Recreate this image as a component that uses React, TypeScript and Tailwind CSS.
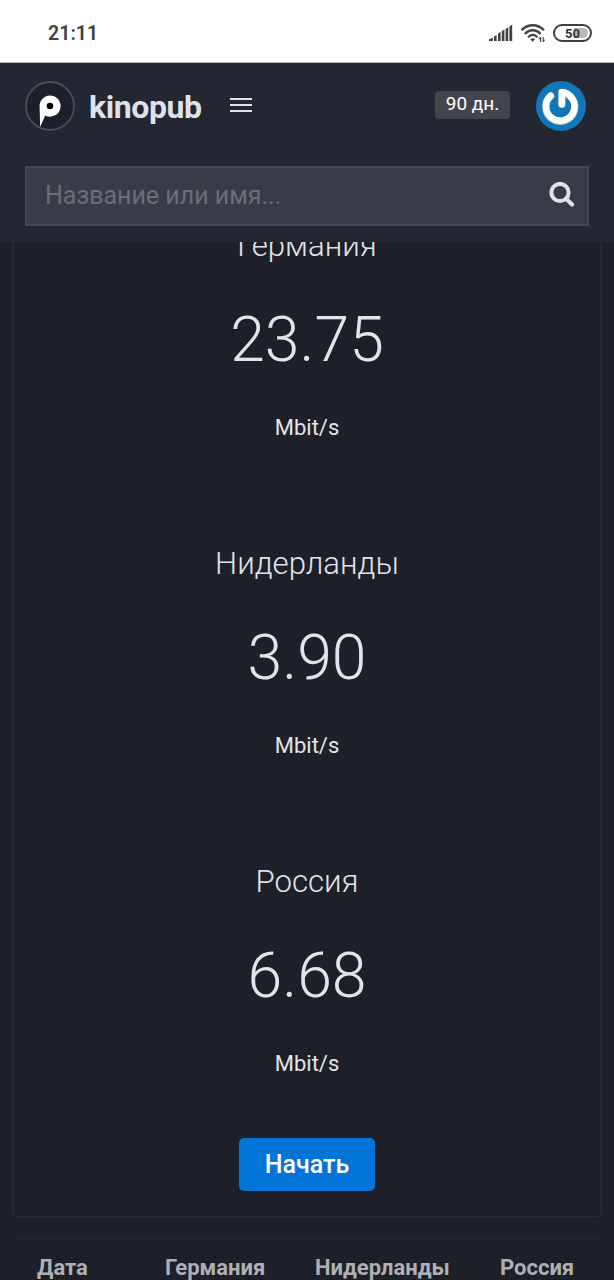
const RESULTS = [
  { country: "Германия", speed: "23.75" },
  { country: "Нидерланды", speed: "3.90" },
  { country: "Россия", speed: "6.68" },
];

const StatusBar = () => (
  <div className="flex h-[63px] shrink-0 items-center justify-between border-b border-[#b5b7bb] bg-white pt-[5px] pr-[22px] pl-12">
    <span className="text-[19.6px] leading-none font-semibold text-[#404040]">21:11</span>
    <div className="flex items-center">
      <svg className="mt-[-2px]" width="24" height="18" viewBox="0 0 24 18" fill="#404040">
        <path d="M0 17v-1.6l3.8-2V17zM5 17v-4.5l2.6-1.4V17zM9 17V9.6l2.6-1.5V17zM12.8 17V7.2l2.6-1.6V17zM16.6 17V5l2.6-1.8V17zM20.4 17V2.4l2.8-1.8V17z" />
      </svg>
      <svg className="mt-[-2px] ml-[7px]" width="26" height="20" viewBox="0 0 26 20" fill="none" stroke="#404040">
        <path d="M1.5 7.2C8 .6 17.5.6 24 7.2" strokeWidth="2.3" />
        <path d="M4.8 11C9.5 6 16 6 20.7 11" strokeWidth="2.3" />
        <path d="M8 14.2c3-3 6.5-3 9.5 0" strokeWidth="2.2" />
        <path d="M10.3 16.3q2.4-2 4.8 0l-2.4 2.4z" fill="#404040" stroke="none" />
        <path d="M20.6 14v5M23.2 14v5M19 16.2l1.6-2M24.6 16.8l-1.4 2" strokeWidth="1.1" />
      </svg>
      <div className="relative mt-[-1px] ml-[7px] flex h-[18px] w-[39px] items-center rounded-full border-2 border-[#404040]">
        <div className="mr-[2px] ml-auto h-[10px] w-[14px] rounded-r-full bg-[#b9b9b9]" />
        <span className="absolute inset-0 flex items-center justify-center text-[13px] leading-none font-bold text-[#333]">50</span>
      </div>
    </div>
  </div>
);

const Logo = () => (
  <svg width="50" height="50" viewBox="0 0 50 50">
    <circle cx="25" cy="25" r="24" fill="#1d1f2b" stroke="#4b4d57" strokeWidth="1.8" />
    <path d="M14.6 25A10.5 10.5 0 1 1 20.2 34.4L15.1 46z" fill="#fff" />
    <circle cx="25" cy="25" r="3.3" fill="#000" />
  </svg>
);

const Avatar = () => (
  <svg width="50" height="50" viewBox="0 0 50 50">
    <circle cx="25" cy="25" r="25" fill="#1277b8" />
    <g fill="none" strokeLinecap="round" strokeLinejoin="round">
      <path d="M26 23.6V11.5A14.5 14.5 0 1 1 14.8 15" stroke="#c3ced8" strokeWidth="7" />
      <path d="M25.8 23V11A14.3 14.3 0 1 1 14.5 14.7" stroke="#fff" strokeWidth="6.5" />
    </g>
  </svg>
);

const Header = () => (
  <header className="relative z-10 h-[179px] shrink-0 bg-[#222731] px-[25px] pt-[18px] text-[#dfe2ea]">
    <div className="flex h-[50px] items-center">
      <Logo />
      <span className="mt-[2px] ml-[14px] text-[32px] leading-none font-bold tracking-[-0.4px]">kinopub</span>
      <svg className="mt-[-3px] ml-[28px]" width="22" height="16" viewBox="0 0 22 16" fill="none" stroke="#dfe2ea" strokeWidth="2.2">
        <path d="M0 2h22M0 8h22M0 14h22" />
      </svg>
      <span className="mt-[-3px] ml-auto flex h-7 w-[75px] items-center justify-center rounded-[4px] bg-[#43454c] pb-[2px] text-[19px] leading-none text-white">
        90 дн.
      </span>
      <div className="mr-[3px] ml-[26px]">
        <Avatar />
      </div>
    </div>
    <div className="mt-[35px] flex h-[60px] items-center justify-between border-2 border-[#434650] bg-[#393c47] pr-[12px] pb-[2px] pl-[18px]">
      <span className="text-[25px] leading-none text-[#6b6e78]">Название или имя...</span>
      <svg width="26" height="26" viewBox="0 0 26 26" fill="none" stroke="#dfe2ea">
        <circle cx="11" cy="10.5" r="8.6" strokeWidth="4" />
        <path d="M17 16.5l6 6" strokeWidth="4.2" strokeLinecap="round" />
      </svg>
    </div>
  </header>
);

const SpeedResult = ({ country, speed }: { country: string; speed: string }) => (
  <div className="flex h-[318px] flex-col items-center">
    <h3 className="text-[31.2px] leading-[48px] font-light">{country}</h3>
    <div className="mt-[30px] text-[62.5px] leading-[80px] font-light">{speed}</div>
    <div className="mt-8 text-[22px] leading-8">Mbit/s</div>
  </div>
);

export default function App() {
  return (
    <div className="flex h-[1280px] w-[614px] flex-col overflow-hidden bg-[#1d2029] font-[Roboto,sans-serif] text-[#e2e4e9]">
      <StatusBar />
      <Header />
      <main className="flex flex-1 flex-col overflow-hidden px-3">
        <section className="mt-[-20px] h-[996px] shrink-0 rounded-[6px] border-2 border-t-0 border-[#252932]">
          {RESULTS.map((r) => (
            <SpeedResult key={r.country} {...r} />
          ))}
          <button className="mx-auto mt-[-38px] flex h-[53px] w-[136px] items-center justify-center rounded-[5px] bg-[#0275d8] text-[25px] leading-none font-medium text-white">
            Начать
          </button>
        </section>
        {/* History table, only its head is in view */}
        <div className="mt-[19px] flex shrink-0 border-t-2 border-[#20242d] pt-[15px] pl-[25px] text-[22px] leading-[28px] font-bold text-[#aeb0b5]">
          <span className="w-[128px]">Дата</span>
          <span className="w-[150px]">Германия</span>
          <span className="w-[185px]">Нидерланды</span>
          <span>Россия</span>
        </div>
      </main>
    </div>
  );
}
